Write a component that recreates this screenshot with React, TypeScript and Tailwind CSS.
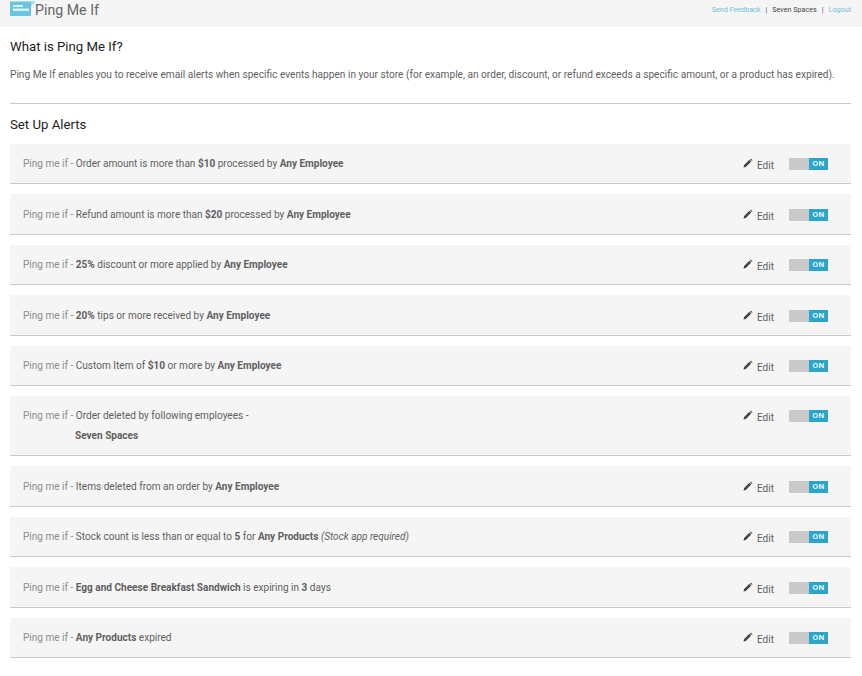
import React from "react";

type Alert = { body: React.ReactNode; extra?: string };

const ALERTS: Alert[] = [
  { body: <>Order amount is more than <b>$10</b> processed by <b>Any Employee</b></> },
  { body: <>Refund amount is more than <b>$20</b> processed by <b>Any Employee</b></> },
  { body: <><b>25%</b> discount or more applied by <b>Any Employee</b></> },
  { body: <><b>20%</b> tips or more received by <b>Any Employee</b></> },
  { body: <>Custom Item of <b>$10</b> or more by <b>Any Employee</b></> },
  { body: <>Order deleted by following employees -</>, extra: "Seven Spaces" },
  { body: <>Items deleted from an order by <b>Any Employee</b></> },
  { body: <>Stock count is less than or equal to <b>5</b> for <b>Any Products</b> <i>(Stock app required)</i></> },
  { body: <><b>Egg and Cheese Breakfast Sandwich</b> is expiring in <b>3</b> days</> },
  { body: <><b>Any Products</b> expired</> },
];

function Logo() {
  return (
    <svg width="25" height="16" viewBox="0 0 25 16" className="shrink-0">
      <path d="M0 1.5H25L21 6V16H0Z" fill="#6cc5e0" />
      <path d="M21 6L25 1.5H21Z" fill="#a5dcec" />
      <path d="M3 5H13V7H3ZM3 8.5H19V11H3Z" fill="#d8f0f7" />
    </svg>
  );
}

function Pencil() {
  return (
    <svg width="10" height="10" viewBox="0 0 10 10" className="mt-[1px] shrink-0">
      <path d="M.5 9.5L1.1 7.1 6.4 1.8 8.2 3.6 2.9 8.9ZM7 1.2 7.7.5 9.5 2.3 8.8 3Z" fill="#444" />
    </svg>
  );
}

function Row({ alert }: { alert: Alert }) {
  return (
    <div className="mb-[10px] flex items-start justify-between border-b border-[#c9c9c9] bg-[#f5f5f5] pl-[13px] pr-[23px] pt-[13.4px] pb-[12px]">
      <div className="text-[10.05px] leading-[14px] text-[#5f5f5f]">
        <div className="whitespace-pre">
          <span className="text-[#8c8c8c]">Ping me if - </span>
          {alert.body}
        </div>
        {alert.extra && <div className="mt-[6px] pl-[52px] font-bold">{alert.extra}</div>}
      </div>
      <div className="flex h-[14px] items-center">
        <div className="flex h-[14px] items-start gap-[4px] text-[10.05px] leading-[14px] text-[#5f5f5f]">
          <Pencil />
          <span className="mt-[2px]">Edit</span>
        </div>
        <div className="ml-[15px] flex h-[12px] w-[39px] justify-end bg-[#c9c9c9]">
          <span className="flex w-[19px] items-center justify-center bg-[#2ba6cb] text-[8px] leading-none font-medium tracking-[0.3px] text-white">ON</span>
        </div>
      </div>
    </div>
  );
}

export default function App() {
  return (
    <div className="min-h-[676px] bg-white font-['Roboto',sans-serif]">
      <div className="flex h-[27px] items-start justify-between bg-[#f5f5f5] pl-[10px] pr-[11px]">
        <div className="flex items-start">
          <Logo />
          <span className="text-[14.2px] leading-[20px] text-[#666]">Ping Me If</span>
        </div>
        <div className="flex gap-[5px] pt-[5px] text-[7.2px] leading-[10px] text-[#444]">
          <span className="text-[#6cc0dc]">Send Feedback</span>
          <span>|</span>
          <span>Seven Spaces</span>
          <span>|</span>
          <span className="text-[#6cc0dc]">Logout</span>
        </div>
      </div>
      <div className="pl-[10px] pr-[11px]">
        <h2 className="mt-[11px] text-[13.2px] leading-[18px] text-[#222]">What is Ping Me If?</h2>
        <p className="mt-[12px] whitespace-nowrap text-[10.13px] leading-[14px] text-[#5f5f5f]">
          Ping Me If enables you to receive email alerts when specific events happen in your store (for example, an order, discount, or refund exceeds a specific amount, or a product has expired).
        </p>
        <div className="mt-[21px] border-t border-[#c9c9c9]" />
        <h2 className="mt-[12px] mb-[10px] text-[13.2px] leading-[18px] text-[#222]">Set Up Alerts</h2>
        {ALERTS.map((alert, i) => (
          <Row key={i} alert={alert} />
        ))}
      </div>
    </div>
  );
}
